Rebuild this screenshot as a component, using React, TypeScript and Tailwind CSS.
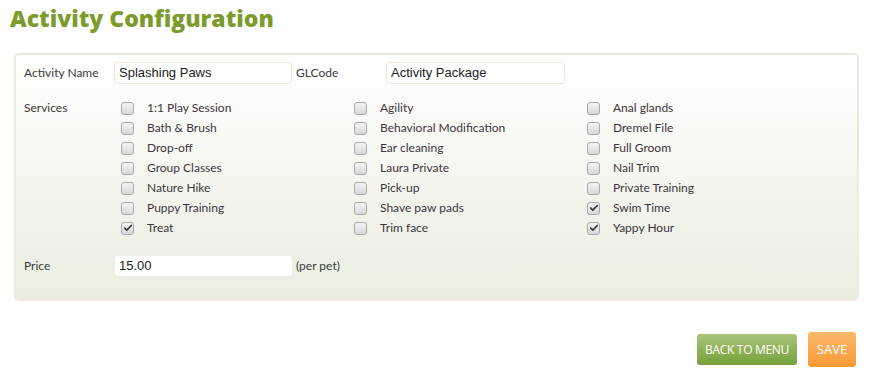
import { Check } from "lucide-react";

const services: { name: string; checked?: boolean }[][] = [
  [
    { name: "1:1 Play Session" },
    { name: "Bath & Brush" },
    { name: "Drop-off" },
    { name: "Group Classes" },
    { name: "Nature Hike" },
    { name: "Puppy Training" },
    { name: "Treat", checked: true },
  ],
  [
    { name: "Agility" },
    { name: "Behavioral Modification" },
    { name: "Ear cleaning" },
    { name: "Laura Private" },
    { name: "Pick-up" },
    { name: "Shave paw pads" },
    { name: "Trim face" },
  ],
  [
    { name: "Anal glands" },
    { name: "Dremel File" },
    { name: "Full Groom" },
    { name: "Nail Trim" },
    { name: "Private Training" },
    { name: "Swim Time", checked: true },
    { name: "Yappy Hour", checked: true },
  ],
];

// Grey rounded box, like the legacy form checkbox
const Box = ({ checked }: { checked?: boolean }) => (
  <span className="flex h-[13px] w-[13px] items-center justify-center rounded-[3px] border border-[#a9a9a9] bg-gradient-to-b from-[#f4f4f4] to-[#d8d8d8]">
    {checked && <Check className="h-[10px] w-[10px] text-[#333]" strokeWidth={4} />}
  </span>
);

const App = () => {
  return (
    <div className="h-[376px] w-[878px] bg-white font-['Lato',sans-serif] text-[12px] text-[#3a3a3a]">
      <h1 className="pl-[10px] pt-[2px] font-['Open_Sans',sans-serif] text-[23px] font-extrabold leading-[32px] text-[#7b9c2c]">
        Activity Configuration
      </h1>

      <div className="ml-[14px] mr-[19px] mt-[19px] h-[248px] rounded-[5px] border-2 border-[#f1e7dd] bg-gradient-to-b from-white to-[#eaeddf] pl-[8px] pt-[7px]">
        <div className="flex h-[22px] items-center">
          <span className="w-[90px]">Activity Name</span>
          <div className="flex h-[22px] w-[178px] items-center rounded-[3px] border border-[#f1e7dd] bg-white px-[4px] font-['Liberation_Sans',sans-serif] text-[13px] text-[#222]">
            Splashing Paws
          </div>
          <span className="w-[94px] pl-[4px]">GLCode</span>
          <div className="flex h-[22px] w-[179px] items-center rounded-[3px] border border-[#f1e7dd] bg-white px-[4px] font-['Liberation_Sans',sans-serif] text-[13px] text-[#222]">
            Activity Package
          </div>
        </div>

        <div className="mt-[14px] flex">
          <span className="w-[97px] leading-[20px]">Services</span>
          <div className="flex">
            {services.map((col, i) => (
              <div key={i} className="w-[233px]">
                {col.map((s) => (
                  <div key={s.name} className="flex h-[20px] items-center">
                    <Box checked={s.checked} />
                    <span className="ml-[13px] text-[#3d3540]">{s.name}</span>
                  </div>
                ))}
              </div>
            ))}
          </div>
        </div>

        <div className="mt-[18px] flex h-[20px] items-center">
          <span className="w-[91px]">Price</span>
          <div className="flex h-[20px] w-[177px] items-center rounded-[3px] bg-white px-[4px] font-['Liberation_Sans',sans-serif] text-[13px] text-[#222]">
            15.00
          </div>
          <span className="ml-[4px]">(per pet)</span>
        </div>
      </div>

      <div className="mr-[22px] mt-[31px] flex items-center justify-end gap-[11px]">
        <button className="h-[31px] w-[100px] rounded-[3px] bg-gradient-to-b from-[#a9c67a] to-[#76a039] font-['Open_Sans',sans-serif] text-[12px] tracking-[-0.3px] text-white">
          BACK TO MENU
        </button>
        <button className="h-[35px] w-[48px] rounded-[3px] bg-gradient-to-b from-[#fbb86a] to-[#f89a32] font-['Open_Sans',sans-serif] text-[13px] font-medium text-white">
          SAVE
        </button>
      </div>
    </div>
  );
};

export default App;
